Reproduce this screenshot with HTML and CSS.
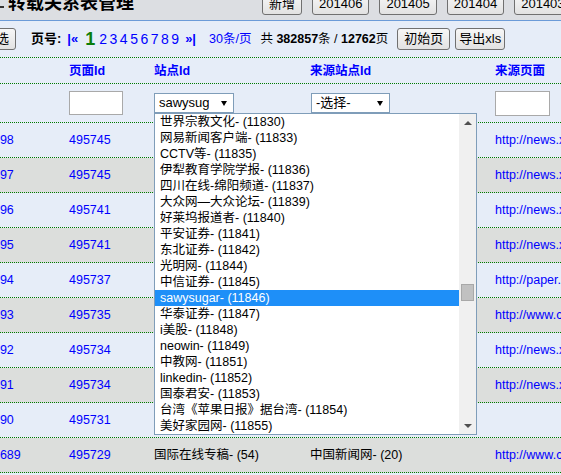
FILE: index.html
```html
<!DOCTYPE html>
<html lang="zh-CN">
<head>
<meta charset="utf-8">
<title>转载关系表管理</title>
<link rel="stylesheet" href="styles.css">
</head>
<body>
<div class="topbar">
  <span class="mark"></span>
  <h1 class="title">转载关系表管理</h1>
  <div class="top-actions">
    <button class="btn">新增</button>
    <button class="btn">201406</button>
    <button class="btn">201405</button>
    <button class="btn">201404</button>
    <button class="btn">201403</button>
  </div>
</div>

<div class="toolbar">
  <button class="btn btn-filter">筛选</button>
  <span class="label">页号:</span>
  <a class="pg-edge first">|«</a>
  <span class="pg-cur">1</span>
  <span class="pages"><a>2</a><a>3</a><a>4</a><a>5</a><a>6</a><a>7</a><a>8</a><a>9</a></span>
  <a class="pg-edge last">»|</a>
  <a class="per-page">30条/页</a>
  <span class="total">共 <b>382857</b>条 / <b>12762</b>页</span>
  <button class="btn btn-init">初始页</button>
  <button class="btn btn-export">导出xls</button>
</div>

<div class="table">
  <div class="row head">
    <div class="cell">Id</div>
    <div class="cell">页面Id</div>
    <div class="cell">站点Id</div>
    <div class="cell">来源站点Id</div>
    <div class="cell">来源页面</div>
  </div>
  <div class="row filter">
    <div class="cell"></div>
    <div class="cell"><input class="field field-page" type="text"></div>
    <div class="cell">
      <div class="select-wrap">
        <div class="select"><span class="select-text">sawysugar- (11846)</span><span class="caret"></span></div>
        <div class="dropdown">
          <div class="options">
            <div class="option">世界宗教文化- (11830)</div>
            <div class="option">网易新闻客户端- (11833)</div>
            <div class="option">CCTV等- (11835)</div>
            <div class="option">伊犁教育学院学报- (11836)</div>
            <div class="option">四川在线-绵阳频道- (11837)</div>
            <div class="option">大众网—大众论坛- (11839)</div>
            <div class="option">好莱坞报道者- (11840)</div>
            <div class="option">平安证券- (11841)</div>
            <div class="option">东北证券- (11842)</div>
            <div class="option">光明网- (11844)</div>
            <div class="option">中信证券- (11845)</div>
            <div class="option sel">sawysugar- (11846)</div>
            <div class="option">华泰证券- (11847)</div>
            <div class="option">i美股- (11848)</div>
            <div class="option">neowin- (11849)</div>
            <div class="option">中教网- (11851)</div>
            <div class="option">linkedin- (11852)</div>
            <div class="option">国泰君安- (11853)</div>
            <div class="option">台湾《苹果日报》据台湾- (11854)</div>
            <div class="option">美好家园网- (11855)</div>
          </div>
          <div class="scrollbar">
            <div class="sb-btn"><span class="tri-up"></span></div>
            <div class="sb-track"><div class="sb-thumb"></div></div>
            <div class="sb-btn"><span class="tri-down"></span></div>
          </div>
        </div>
      </div>
    </div>
    <div class="cell">
      <div class="select select-src"><span class="select-text">-选择-</span><span class="caret"></span></div>
    </div>
    <div class="cell"><input class="field field-src" type="text"></div>
  </div>

  <div class="row light">
    <div class="cell"><a>1498</a></div><div class="cell"><a>495745</a></div>
    <div class="cell">新华网- (1)</div><div class="cell">新华网- (1)</div>
    <div class="cell"><a>http://news.xinhuanet.com/world/2014-06/20/c_126648.htm</a></div>
  </div>
  <div class="row grey">
    <div class="cell"><a>1497</a></div><div class="cell"><a>495745</a></div>
    <div class="cell">新华网- (1)</div><div class="cell">新华网- (1)</div>
    <div class="cell"><a>http://news.xinhuanet.com/world/2014-06/20/c_126647.htm</a></div>
  </div>
  <div class="row light">
    <div class="cell"><a>1496</a></div><div class="cell"><a>495741</a></div>
    <div class="cell">新华网- (1)</div><div class="cell">新华网- (1)</div>
    <div class="cell"><a>http://news.xinhuanet.com/fortune/2014-06/20/c_126646.htm</a></div>
  </div>
  <div class="row grey">
    <div class="cell"><a>1495</a></div><div class="cell"><a>495741</a></div>
    <div class="cell">新华网- (1)</div><div class="cell">新华网- (1)</div>
    <div class="cell"><a>http://news.xinhuanet.com/fortune/2014-06/20/c_126645.htm</a></div>
  </div>
  <div class="row light">
    <div class="cell"><a>1494</a></div><div class="cell"><a>495737</a></div>
    <div class="cell">中国证券网- (32)</div><div class="cell">上海证券报- (41)</div>
    <div class="cell"><a>http://paper.cnstock.com/html/2014-06/20/content_503.htm</a></div>
  </div>
  <div class="row grey">
    <div class="cell"><a>1493</a></div><div class="cell"><a>495735</a></div>
    <div class="cell">国际在线专稿- (54)</div><div class="cell">中国新闻网- (20)</div>
    <div class="cell"><a>http://www.chinanews.com/gj/2014/06-20/6301.shtml</a></div>
  </div>
  <div class="row light">
    <div class="cell"><a>1492</a></div><div class="cell"><a>495734</a></div>
    <div class="cell">新华网- (1)</div><div class="cell">新华网- (1)</div>
    <div class="cell"><a>http://news.xinhuanet.com/politics/2014-06/20/c_126643.htm</a></div>
  </div>
  <div class="row grey">
    <div class="cell"><a>1491</a></div><div class="cell"><a>495734</a></div>
    <div class="cell">新华网- (1)</div><div class="cell">新华网- (1)</div>
    <div class="cell"><a>http://news.xinhuanet.com/politics/2014-06/20/c_126642.htm</a></div>
  </div>
  <div class="row light">
    <div class="cell"><a>1490</a></div><div class="cell"><a>495731</a></div>
    <div class="cell">光明网- (11844)</div><div class="cell"></div>
    <div class="cell"></div>
  </div>
  <div class="row grey">
    <div class="cell"><a>14689</a></div><div class="cell"><a>495729</a></div>
    <div class="cell">国际在线专稿- (54)</div><div class="cell">中国新闻网- (20)</div>
    <div class="cell"><a>http://www.chinanews.com/gj/2014/06-20/6300.shtml</a></div>
  </div>
</div>
</body>
</html>
```

FILE: styles.css
```css
* { box-sizing: border-box; }

html, body {
  margin: 0;
  padding: 0;
  overflow: hidden;
}

body {
  width: 561px;
  height: 475px;
  background: #e6edf8;
  color: #000;
  font-family: "Liberation Sans", "Noto Sans CJK SC", sans-serif;
  font-size: 12.5px;
  line-height: 16px;
  white-space: nowrap;
}

a {
  color: #0000ff;
  text-decoration: none;
}

/* ---------- top bar ---------- */
.topbar {
  height: 21px;
  background: #dcdee2;
  border-bottom: 1px solid #6b9bd8;
  display: flex;
  align-items: flex-start;
  overflow: hidden;
}

.mark {
  flex: none;
  width: 4px;
  height: 2px;
  margin-top: 6px;
  background: #333;
}

.title {
  flex: none;
  margin: -8px 0 0 4px;
  font-family: "Noto Sans CJK SC", sans-serif;
  font-size: 18px;
  line-height: 18px;
  font-weight: bold;
}

.top-actions {
  flex: none;
  display: flex;
  gap: 10px;
  margin: -7px 0 0 128px;
}

.btn {
  flex: none;
  height: 22px;
  padding: 0 6px;
  border: 1px solid #707070;
  border-radius: 3px;
  background: linear-gradient(#f7f7f7, #e2e2e2);
  color: #000;
  font-family: "Liberation Sans", "Noto Sans CJK SC", sans-serif;
  font-size: 13px;
  line-height: 20px;
}

/* ---------- toolbar ---------- */
.toolbar {
  height: 37px;
  display: flex;
  align-items: center;
  border-bottom: 1px dotted #007a00;
}

.btn-filter { margin-left: -24px; }

.label {
  margin-left: 15px;
  font-weight: bold;
  font-size: 13px;
}

.pg-edge {
  font-weight: bold;
  font-size: 13px;
}
.pg-edge.first { margin-left: 6px; }
.pg-edge.last { margin-left: 6px; }

.pg-cur {
  margin-left: 7px;
  color: #0a7d0a;
  font-weight: bold;
  font-size: 18px;
}

.pages {
  margin-left: 4px;
  display: flex;
  gap: 2.5px;
  font-size: 14px;
}

.per-page { margin-left: 13px; }

.total { margin-left: 9px; }

.btn-init { margin-left: 9px; }
.btn-export { margin-left: 5px; padding: 0 3px; }

/* ---------- table ---------- */
.table {
  margin-left: -14px;
}

.row {
  display: grid;
  grid-template-columns: 83px 85px 156px 185px 1fr;
  align-items: center;
  border-bottom: 1px dotted #007a00;
  height: 35px;
}

.head {
  height: 26px;
}
.head .cell {
  color: #0000ff;
  font-weight: bold;
}

.filter {
  height: 39px;
}

.light { background: #e6edf8; }
.grey { background: #dcdedc; }

.field {
  display: block;
  width: 54px;
  height: 24px;
  margin: 0;
  border: 1px solid #a9a9a9;
  background: #fff;
  padding: 0;
}
.field-src { width: 55px; height: 25px; }

.select-wrap {
  position: relative;
  width: 80px;
}

.select {
  width: 80px;
  height: 20px;
  border: 1px solid #7f9db9;
  background: #fff;
  display: flex;
  align-items: center;
  padding: 0 6px 0 4px;
  font-size: 13px;
}

.select-src {
  width: 79px;
  margin-left: 1px;
}

.select-text {
  flex: none;
  width: 50px;
  overflow: hidden;
  line-height: 16px;
}

.select-src .select-text { width: 58px; }

.caret {
  margin-left: auto;
  width: 0;
  height: 0;
  border-left: 3.5px solid transparent;
  border-right: 3.5px solid transparent;
  border-top: 5px solid #000;
}

/* ---------- dropdown list ---------- */
.dropdown {
  position: absolute;
  left: 0;
  top: 100%;
  z-index: 5;
  width: 323px;
  height: 322px;
  border: 1px solid #7f9db9;
  background: #fff;
  display: flex;
}

.options {
  flex: 1;
  overflow: hidden;
}

.option {
  height: 16px;
  line-height: 16px;
  padding-left: 5px;
  color: #000;
  overflow: hidden;
}

.option.sel {
  background: #1e8ff8;
  color: #fff;
}

.scrollbar {
  flex: none;
  width: 17px;
  background: #f0f0f0;
  display: flex;
  flex-direction: column;
}

.sb-btn {
  height: 17px;
  display: flex;
  align-items: center;
  justify-content: center;
}

.tri-up {
  width: 0;
  height: 0;
  border-left: 4px solid transparent;
  border-right: 4px solid transparent;
  border-bottom: 4px solid #505050;
}

.tri-down {
  width: 0;
  height: 0;
  border-left: 4px solid transparent;
  border-right: 4px solid transparent;
  border-top: 4px solid #505050;
}

.sb-track {
  flex: 1;
}

.sb-thumb {
  width: 13px;
  height: 17px;
  margin: 153px auto 0;
  background: #c1c1c1;
  border: 1px solid #a8a8a8;
}
```
